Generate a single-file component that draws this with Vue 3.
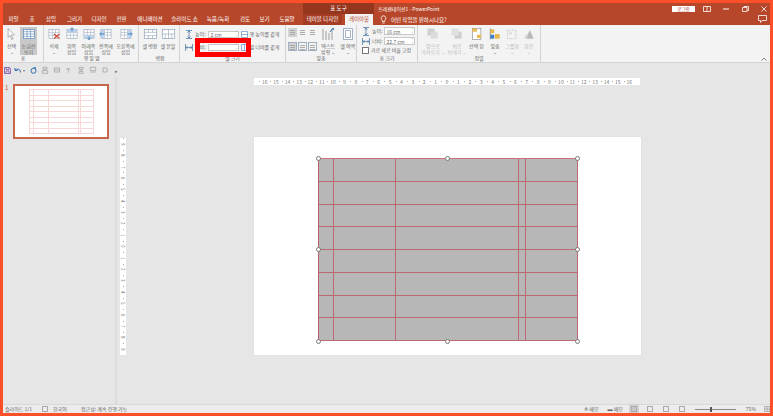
<script setup>
const tabs = [
  { t: '파일', w: 21 }, { t: '홈', w: 16 }, { t: '삽입', w: 22 }, { t: '그리기', w: 25 },
  { t: '디자인', w: 24 }, { t: '전환', w: 21 }, { t: '애니메이션', w: 36 }, { t: '슬라이드 쇼', w: 33 },
  { t: '녹음/녹화', w: 34 }, { t: '검토', w: 20 }, { t: '보기', w: 19 }, { t: '도움말', w: 26 }
]

// 리본 아이콘
const T = '<rect x="2.5" y="2.5" width="13" height="11" fill="#fff" stroke="#8a9bb0" stroke-width=".7"/><path d="M2.5 6h13M2.5 9.5h13M7 2.5v11M11 2.5v11" stroke="#8a9bb0" stroke-width=".6"/>'
const icons = {
  select: '<path d="M4 1l8 8-4 .4 2.4 5-1.6.7L6.5 10 4 12.5z" fill="#fff" stroke="#888" stroke-width=".8"/>',
  grid: '<rect x="2" y="2" width="14" height="12" fill="#fff" stroke="#4c7fb3" stroke-width=".8"/><path d="M2 5h14M2 8h14M2 11h14M6.5 2v12M11 2v12" stroke="#4c7fb3" stroke-width=".7"/>',
  del: T + '<path d="M9 8l7 6M16 8l-7 6" stroke="#d8452b" stroke-width="1.5"/>',
  above: T + '<rect x="2.5" y="2.5" width="13" height="3.5" fill="#bcd3ea"/><path d="M9 5V0M7 2l2-2 2 2" stroke="#2f75b5" fill="none"/>',
  below: T + '<rect x="2.5" y="9.5" width="13" height="4" fill="#bcd3ea"/><path d="M9 11v4M7 13.5l2 2 2-2" stroke="#2f75b5" fill="none"/>',
  left: T + '<rect x="2.5" y="2.5" width="4.5" height="11" fill="#bcd3ea"/><path d="M7 8H1M3 6L1 8l2 2" stroke="#2f75b5" fill="none"/>',
  right: T + '<rect x="11" y="2.5" width="4.5" height="11" fill="#bcd3ea"/><path d="M11 8h6M15 6l2 2-2 2" stroke="#2f75b5" fill="none"/>',
  merge: '<rect x="1.5" y="2.5" width="15" height="11" fill="#fff" stroke="#7d93ad" stroke-width=".7"/><path d="M1.5 6h15M1.5 10h15M6.5 2.5V6M11.5 2.5V6M6.5 10v3.5M11.5 10v3.5" stroke="#7d93ad" stroke-width=".6"/>',
  split: '<rect x="1.5" y="2.5" width="15" height="11" fill="#fff" stroke="#7d93ad" stroke-width=".7"/><path d="M1.5 8h15M9 2.5V13.5M5 8v5.5M13 8v5.5" stroke="#7d93ad" stroke-width=".6"/>',
  front: '<rect x="2" y="1" width="9" height="9" fill="#cfcfcf"/><rect x="6" y="5" width="9" height="9" fill="#dcdcdc"/>',
  back: '<rect x="6" y="5" width="9" height="9" fill="#cfcfcf"/><rect x="2" y="1" width="9" height="9" fill="#e0e0e0"/>',
  pane: '<rect x="3" y="1" width="11" height="14" fill="#fff" stroke="#777" stroke-width=".7"/><rect x="3" y="1" width="6" height="4" fill="#e8b84a"/><rect x="9" y="9" width="5" height="4" fill="#e8b84a"/>',
  align: '<path d="M3 1v14" stroke="#555" stroke-width=".8"/><rect x="3" y="2" width="5" height="5" fill="#e8b84a"/><rect x="3" y="9" width="5" height="5" fill="#3f7fc1"/><rect x="9" y="8" width="6" height="6" fill="#e8b84a"/>',
  group: '<rect x="3" y="3" width="11" height="11" fill="none" stroke="#c4c4c4" stroke-dasharray="2 1"/><rect x="5" y="5" width="4" height="4" fill="#e2e2e2"/>',
  rotate: '<path d="M10 3l5 11H5z" fill="#b9b9b9"/><path d="M2 14l4-7 1 7z" fill="#dcdcdc"/>'
}

const rowBtns = [
  { i: 'del', a: '삭제', b: '⌄', w: 18 }, { i: 'above', a: '위쪽', b: '삽입', w: 17 }, { i: 'below', a: '아래쪽', b: '삽입', w: 17 },
  { i: 'left', a: '왼쪽에', b: '삽입', w: 18 }, { i: 'right', a: '오른쪽에', b: '삽입', w: 21 }
]
const arrangeBtns = [
  { i: 'front', a: '앞으로', b: '가져오기 ⌄', w: 30, off: true }, { i: 'back', a: '뒤로', b: '보내기 ⌄', w: 18, off: true },
  { i: 'pane', a: '선택 창', b: '', w: 21 }, { i: 'align', a: '맞춤', b: '⌄', w: 16 },
  { i: 'group', a: '그룹화', b: '⌄', w: 18, off: true }, { i: 'rotate', a: '회전', b: '⌄', w: 15, off: true }
]

const hruler = []
for (let n = 16; n > 0; n--) hruler.push(n)
for (let n = 0; n <= 16; n++) hruler.push(n)
const vruler = [9, 8, 7, 6, 5, 4, 3, 2, 1, 0, 1, 2, 3, 4, 5, 6, 7, 8, 9]
const qat = ['M3 2h6v3H3zM2 7h8v4H2z', 'M2 3h8v6H2zM2 6h8', 'M2 6l3-3 3 3M5 3v7', 'M3 2h6v3H3zM3 8h6v3H3zM6 5v3', 'M2 2h8v5H2zM2 9h8', 'M3 3h6v6H3z']

// 표 칸
const colWidths = [15, 62, 123, 7, 52]
const cells = []
for (let r = 0; r < 8; r++) {
  for (let c = 0; c < colWidths.length; c++) cells.push(r + '-' + c)
}
</script>

<template>
  <div class="page">
    <header class="titlebar">
      <div class="title-row">
        <div class="tools-label">표 도구</div>
        <div class="doc-title">프레젠테이션1 - PowerPoint</div>
        <button class="login">로그인</button>
        <div class="win-btns">
          <svg width="8" height="6" viewBox="0 0 8 6"><path d="M.5.5h7v5h-7zM4 .5v5" fill="none" stroke="#fff" stroke-width=".8" /></svg>
          <svg width="8" height="6" viewBox="0 0 8 6"><path d="M1 3h6" stroke="#fff" /></svg>
          <svg width="8" height="6" viewBox="0 0 8 6"><path d="M1.5 1.5h4.500v4h-4.500zM3 1.500V.5h4.500v4h-1.500" fill="none" stroke="#fff" stroke-width=".8" /></svg>
          <svg width="8" height="6" viewBox="0 0 8 6"><path d="M1.5.5l5 5M6.5.5l-5 5" stroke="#fff" stroke-width=".8" /></svg>
        </div>
      </div>
      <div class="tab-row">
        <span v-for="tab in tabs" :key="tab.t" class="tab" :style="{ width: tab.w + 'px' }">{{ tab.t }}</span>
        <span class="tab tool-tab">테이블 디자인</span>
        <span class="tab active-tab">레이아웃</span>
        <svg class="bulb" width="7" height="9" viewBox="0 0 7 9"><path d="M3.5.8a2.400 2.400 0 0 0-1.300 4.400V6.500h2.600V5.200A2.400 2.400 0 0 0 3.500.8zM2.400 8h2.200" fill="none" stroke="#fff" stroke-width=".8" /></svg>
        <span class="tell">어떤 작업을 원하시나요?</span>
        <svg class="comment" width="9" height="8" viewBox="0 0 9 8"><path d="M.5.5h8v5H4L2.500 7.500v-2h-2z" fill="none" stroke="#fff" stroke-width=".8" /></svg>
      </div>
    </header>

    <section class="ribbon">
      <div class="group g-table">
        <div class="big-row">
          <div class="big" style="width: 17px">
            <svg width="14" height="14" viewBox="0 0 18 16" v-html="icons.select"></svg>
            <span>선택</span><span>⌄</span>
          </div>
          <div class="big on" style="width: 17px">
            <svg width="14" height="14" viewBox="0 0 18 16" v-html="icons.grid"></svg>
            <span>눈금선</span><span>보기</span>
          </div>
        </div>
        <div class="group-name">표</div>
      </div>

      <div class="group g-rows">
        <div class="big-row">
          <div v-for="b in rowBtns" :key="b.a" class="big" :style="{ width: b.w + 'px' }">
            <svg width="14" height="14" viewBox="0 0 18 16" v-html="icons[b.i]"></svg>
            <span>{{ b.a }}</span><span>{{ b.b }}</span>
          </div>
        </div>
        <div class="group-name">행 및 열</div>
      </div>

      <div class="group g-merge">
        <div class="big-row">
          <div class="big" style="width: 18px">
            <svg width="15" height="14" viewBox="0 0 18 16" v-html="icons.merge"></svg>
            <span>셀 병합</span>
          </div>
          <div class="big" style="width: 18px">
            <svg width="15" height="14" viewBox="0 0 18 16" v-html="icons.split"></svg>
            <span>셀 분할</span>
          </div>
        </div>
        <div class="group-name">병합</div>
      </div>

      <div class="group g-cell">
        <div class="cell-rows">
          <div class="size-row">
            <svg width="8" height="9" viewBox="0 0 8 9"><path d="M1 .5h6M1 8.500h6M4 1v7M2.500 2.500L4 1l1.500 1.500M2.500 6.500L4 8l1.500-1.500" stroke="#3f6f9f" fill="none" stroke-width=".7" /></svg>
            <span class="lbl">높이:</span>
            <div class="spin"><span>2 cm</span><i>⌃<br />⌄</i></div>
            <svg class="dist" width="7" height="7" viewBox="0 0 7 7"><path d="M.5.5h6v6h-6zM.5 3.500h6" fill="#fff" stroke="#4c7fb3" stroke-width=".6" /></svg>
            <span class="lbl">행 높이를 같게</span>
          </div>
          <div class="size-row">
            <svg width="8" height="9" viewBox="0 0 8 9"><path d="M.5 1v7M7.500 1v7M1 4.500h6M2.500 3L1 4.500 2.500 6M5.500 3L7 4.500 5.500 6" stroke="#3f6f9f" fill="none" stroke-width=".7" /></svg>
            <span class="lbl">너비:</span>
            <div class="spin"><span></span><i>⌃<br />⌄</i></div>
            <svg class="dist" width="7" height="7" viewBox="0 0 7 7"><path d="M.5.5h6v6h-6zM3.500.5v6" fill="#fff" stroke="#4c7fb3" stroke-width=".6" /></svg>
            <span class="lbl">열 너비를 같게</span>
          </div>
        </div>
        <div class="group-name">셀 크기</div>
        <div class="red-box"></div>
      </div>

      <div class="group g-align">
        <div class="align-body">
          <div class="align-grid">
            <i class="al sel"></i><i class="al"></i><i class="al"></i>
            <i class="al sel b"></i><i class="al b"></i><i class="al b"></i>
          </div>
          <div class="big" style="width: 19px">
            <svg width="14" height="14" viewBox="0 0 14 14"><path d="M2 2v11M5 4v9M8 6v7M11 2v11" stroke="#888" stroke-width=".8" /><path d="M9 5l3-4 1 2" stroke="#2f75b5" fill="none" /></svg>
            <span>텍스트</span><span>방향 ⌄</span>
          </div>
          <div class="big" style="width: 17px">
            <svg width="12" height="14" viewBox="0 0 12 14"><path d="M1.500 1.500h9v11h-9zM3.500 3.500h5v7h-5z" fill="#fff" stroke="#7d93ad" stroke-width=".7" /></svg>
            <span>셀 여백</span><span>⌄</span>
          </div>
        </div>
        <div class="group-name">맞춤</div>
      </div>

      <div class="group g-size">
        <div class="cell-rows">
          <div class="size-row">
            <svg width="8" height="9" viewBox="0 0 8 9"><path d="M1 .5h6M1 8.500h6M4 1v7M2.500 2.500L4 1l1.500 1.500M2.500 6.500L4 8l1.500-1.500" stroke="#3f6f9f" fill="none" stroke-width=".7" /></svg>
            <span class="lbl">높이:</span>
            <div class="spin small"><span>16 cm</span><i>⌃<br />⌄</i></div>
          </div>
          <div class="size-row">
            <svg width="8" height="9" viewBox="0 0 8 9"><path d="M.5 1v7M7.500 1v7M1 4.500h6M2.500 3L1 4.500 2.500 6M5.500 3L7 4.500 5.500 6" stroke="#3f6f9f" fill="none" stroke-width=".7" /></svg>
            <span class="lbl">너비:</span>
            <div class="spin small"><span>22.7 cm</span><i>⌃<br />⌄</i></div>
          </div>
          <label class="lock"><i class="check"></i>가로 세로 비율 고정</label>
        </div>
        <div class="group-name">표 크기</div>
      </div>

      <div class="group g-arrange">
        <div class="big-row">
          <div v-for="b in arrangeBtns" :key="b.a" class="big" :class="{ off: b.off }" :style="{ width: b.w + 'px' }">
            <svg width="14" height="14" viewBox="0 0 18 16" v-html="icons[b.i]"></svg>
            <span>{{ b.a }}</span><span>{{ b.b }}</span>
          </div>
        </div>
        <div class="group-name">정렬</div>
      </div>
      <svg class="collapse" width="6" height="4" viewBox="0 0 6 4"><path d="M.5 3.500L3 1l2.500 2.500" fill="none" stroke="#666" stroke-width=".8" /></svg>
    </section>

    <div class="qat">
      <svg class="save" width="7" height="7" viewBox="0 0 7 7"><path d="M.5.5h5l1 1v5h-6zM2 .5v2h3v-2M2 6.500V4h3v2.500" fill="none" stroke="#7a4fa3" stroke-width=".8" /></svg>
      <div class="undo">
        <svg width="9" height="7" viewBox="0 0 9 7"><path d="M1 1v2.500h2.500M1 3.500a3 3 0 0 1 5.500 2" fill="none" stroke="#2f6fae" /></svg>
        <span>▾</span>
      </div>
      <svg width="7" height="7" viewBox="0 0 7 7"><circle cx="3.500" cy="3.800" r="2.500" fill="none" stroke="#2f6fae" /><path d="M3.500.5h2v1.500" fill="none" stroke="#2f6fae" stroke-width=".8" /></svg>
      <svg v-for="(d, i) in qat" :key="i" width="8" height="8" viewBox="0 0 12 12"><path :d="d" fill="none" stroke="#999" /></svg>
      <span class="qat-more">▸</span>
    </div>

    <main class="work">
      <aside class="thumbs">
        <span class="num">1</span>
        <div class="thumb">
          <div class="mini">
            <i v-for="c in cells" :key="c"></i>
          </div>
        </div>
      </aside>

      <div class="editor">
        <div class="hruler">
          <span v-for="(n, i) in hruler" :key="i">{{ n }}</span>
        </div>
        <div class="stage">
          <div class="vruler">
            <span v-for="(n, i) in vruler" :key="i">{{ n }}</span>
          </div>
          <div class="slide">
            <div class="table-wrap">
              <div class="table">
                <i v-for="c in cells" :key="c"></i>
              </div>
              <b class="handle" style="left: 0; top: 0"></b>
              <b class="handle" style="left: 50%; top: 0"></b>
              <b class="handle" style="left: 100%; top: 0"></b>
              <b class="handle" style="left: 0; top: 50%"></b>
              <b class="handle" style="left: 100%; top: 50%"></b>
              <b class="handle" style="left: 0; top: 100%"></b>
              <b class="handle" style="left: 50%; top: 100%"></b>
              <b class="handle" style="left: 100%; top: 100%"></b>
            </div>
          </div>
        </div>
      </div>
    </main>

    <footer class="status">
      <span style="width: 36px">슬라이드 1/1</span>
      <svg width="6" height="6" viewBox="0 0 6 6"><path d="M.5.5h5v5h-5z" fill="none" stroke="#888" stroke-width=".7" /></svg>
      <span style="width: 21px; margin-left: 5px">한국어</span>
      <span class="access">접근성: 계속 진행 가능</span>
      <span>≜ 메모</span>
      <span class="notes">▬ 메모</span>
      <div class="views">
        <i class="view on"></i><i class="view"></i><i class="view"></i><i class="view"></i>
      </div>
      <div class="zoom"><b></b></div>
      <span class="pct">75%</span>
      <svg class="fit" width="6" height="6" viewBox="0 0 6 6"><path d="M.5.5h5v5h-5zM2 2h2v2H2z" fill="none" stroke="#999" stroke-width=".7" /></svg>
    </footer>
  </div>
</template>

<style scoped>
.page {
  position: relative;
  width: 773px;
  height: 416px;
  box-sizing: border-box;
  border: 3px solid #fd5028;
  display: flex;
  flex-direction: column;
  background: #e6e6e6;
  font-family: "Noto Sans CJK KR", "Noto Sans", sans-serif;
  color: #666;
  overflow: hidden;
}

.titlebar {
  height: 22px;
  background: #b7472a;
  color: #fff;
  font-size: 5.5px;
  flex: none;
}
.title-row {
  height: 11px;
  display: flex;
  align-items: center;
  position: relative;
}
.tools-label {
  position: absolute;
  left: 300px;
  top: 0;
  width: 71px;
  height: 11px;
  background: #95361f;
  line-height: 11px;
  text-align: center;
}
.doc-title {
  margin-left: 375px;
  line-height: 11px;
  font-size: 5px;
}
.login {
  margin-left: auto;
  width: 23px;
  height: 6px;
  margin-right: 8px;
  padding: 0;
  border: none;
  background: #fff;
  color: #a33;
  font: 4.5px/6px "Noto Sans CJK KR", sans-serif;
}
.win-btns {
  display: flex;
  gap: 11px;
  margin-right: 2px;
}
.tab-row {
  height: 11px;
  display: flex;
  align-items: center;
  position: relative;
}
.tab {
  text-align: center;
  white-space: nowrap;
  line-height: 11px;
}
.tool-tab {
  width: 39px;
  margin-left: 3px;
  background: #a53d24;
}
.active-tab {
  width: 28px;
  margin-left: 3px;
  background: #f3f3f3;
  color: #b7472a;
  height: 11px;
}
.bulb {
  margin-left: 7px;
}
.tell {
  margin-left: 4px;
}
.comment {
  position: absolute;
  right: 3px;
  top: 1px;
}

.ribbon {
  position: relative;
  height: 38px;
  flex: none;
  display: flex;
  box-sizing: border-box;
  background: #f3f3f3;
  border-bottom: 1px solid #d4d4d4;
  font-size: 5px;
  line-height: 6px;
}
.group {
  position: relative;
  height: 37px;
  box-sizing: border-box;
  border-right: 1px solid #d2d2d2;
  display: flex;
  flex-direction: column;
  flex: none;
}
.group-name {
  margin-top: auto;
  text-align: center;
  height: 7px;
  color: #666;
}
.g-table { width: 41px; }
.g-rows { width: 95px; padding-left: 1px; }
.g-merge { width: 41px; padding-left: 2px; }
.g-cell { width: 106px; }
.g-align { width: 71px; }
.g-size { width: 61px; }
.g-arrange { width: 123px; }
.big-row {
  display: flex;
  padding-top: 2px;
}
.big {
  display: flex;
  flex-direction: column;
  align-items: center;
  white-space: nowrap;
  height: 28px;
}
.big svg {
  margin-bottom: 2px;
  flex: none;
}
.big.on {
  background: #c8c8c8;
}
.big.off {
  color: #b8b8b8;
}
.cell-rows {
  padding: 2px 0 0 5px;
  display: flex;
  flex-direction: column;
  gap: 2px;
}
.g-cell .cell-rows {
  padding-top: 5px;
  gap: 5px;
}
.size-row {
  display: flex;
  align-items: center;
  height: 8px;
  white-space: nowrap;
}
.lbl {
  margin-left: 2px;
}
.spin {
  width: 31px;
  height: 7px;
  margin-left: 2px;
  background: #fff;
  border: 1px solid #c8c8c8;
  box-sizing: border-box;
  display: flex;
  align-items: center;
  justify-content: space-between;
  padding-left: 2px;
  line-height: 5px;
}
.spin.small {
  width: 31px;
  height: 8px;
  margin-left: 1px;
}
.spin i {
  font-style: normal;
  font-size: 3px;
  line-height: 3px;
  color: #666;
}
.dist {
  margin-left: 2px;
  flex: none;
}
.red-box {
  position: absolute;
  left: 15px;
  top: 13px;
  width: 56px;
  height: 19px;
  box-sizing: border-box;
  border: 5px solid #ff0000;
}
.align-body {
  display: flex;
  padding: 2px 0 0 2px;
  gap: 2px;
}
.align-grid {
  display: grid;
  grid-template-columns: repeat(3, 9px);
  grid-auto-rows: 9px;
  gap: 5px 1px;
  margin-top: 1px;
}
.al {
  background:
    linear-gradient(#aaa, #aaa) center 2px / 5px 1px no-repeat,
    linear-gradient(#aaa, #aaa) center 4px / 5px 1px no-repeat,
    linear-gradient(#aaa, #aaa) center 6px / 5px 1px no-repeat;
}
.al.sel {
  background-color: #d2d2d2;
}
.al.b {
  border: 1px solid #9fb0c2;
  box-sizing: border-box;
}
.lock {
  display: flex;
  align-items: center;
  gap: 2px;
  white-space: nowrap;
  height: 6px;
}
.check {
  width: 5px;
  height: 5px;
  border: 1px solid #777;
  background: #fff;
}
.collapse {
  position: absolute;
  right: 3px;
  bottom: 1px;
}

.qat {
  height: 14px;
  flex: none;
  display: flex;
  align-items: center;
  gap: 4px;
  padding-left: 1px;
  box-sizing: border-box;
  background: #e6e6e6;
}
.save {
  margin-right: -1px;
}
.undo {
  width: 12px;
  display: flex;
  align-items: center;
  font-size: 4px;
  color: #777;
}
.qat-more {
  font-size: 5px;
  color: #777;
  margin-left: 2px;
}

.work {
  flex: 1;
  min-height: 0;
  display: flex;
}
.thumbs {
  width: 114px;
  box-sizing: border-box;
  border-right: 2px solid #dcdcdc;
  padding: 7px 0 0 2px;
  display: flex;
  align-items: flex-start;
  gap: 5px;
  flex: none;
}
.num {
  font-size: 6px;
  line-height: 7px;
  color: #c8553a;
}
.thumb {
  width: 96px;
  height: 55px;
  box-sizing: border-box;
  border: 2px solid #c5664d;
  background: #fff;
  padding: 3px 0 0 14px;
}
.mini {
  width: 64px;
  display: grid;
  grid-template-columns: 4px 15px 30px 2px 13px;
  grid-auto-rows: 5.5px;
  border-top: 1px solid #f8d7d7;
  border-left: 1px solid #f8d7d7;
}
.mini i {
  border-right: 1px solid #f8d7d7;
  border-bottom: 1px solid #f8d7d7;
}

.editor {
  flex: 1;
  min-width: 0;
  padding: 1px 0 0 137px;
  display: flex;
  flex-direction: column;
}
.hruler {
  width: 386px;
  height: 7px;
  background: #fff;
  display: flex;
  justify-content: center;
  font-size: 5px;
  line-height: 7px;
  color: #777;
}
.hruler span {
  width: 11.4px;
  text-align: center;
  background: linear-gradient(#aaa, #aaa) 0 50% / 1px 1px no-repeat;
}
.stage {
  margin: 52px 0 0 -134px;
  display: flex;
}
.vruler {
  width: 6px;
  height: 217px;
  margin-top: 1px;
  background: #fff;
  display: flex;
  flex-direction: column;
  justify-content: center;
  font-size: 4.5px;
  color: #777;
}
.vruler span {
  height: 11.4px;
  line-height: 6px;
  writing-mode: vertical-rl;
  text-align: center;
  background: linear-gradient(#aaa, #aaa) 50% 0 / 1px 1px no-repeat;
}
.slide {
  width: 387px;
  height: 218px;
  margin-left: 128px;
  background: #fff;
  box-shadow: 0 0 1px #cfcfcf;
  padding: 21px 0 0 64px;
  box-sizing: border-box;
  flex: none;
}
.table-wrap {
  position: relative;
  width: 259px;
  height: 183px;
}
.table {
  width: 259px;
  height: 183px;
  display: grid;
  grid-template-columns: 15px 62px 123px 7px 52px;
  grid-template-rows: repeat(8, 1fr);
  background: #b7b7b7;
  box-sizing: border-box;
  border-top: 1px solid #c9707a;
  border-left: 1px solid #b8606a;
}
.table i {
  border-right: 1px solid #bc6a72;
  border-bottom: 1px solid #bc6a72;
}
.handle {
  position: absolute;
  width: 5px;
  height: 5px;
  margin: -2.5px 0 0 -2.5px;
  box-sizing: border-box;
  border: 1px solid #777;
  border-radius: 50%;
  background: #fff;
}

.status {
  height: 8px;
  flex: none;
  display: flex;
  align-items: center;
  background: #ececec;
  border-top: 1px solid #dadada;
  font-size: 5px;
  line-height: 8px;
  padding-left: 2px;
  white-space: nowrap;
  color: #666;
}
.status > svg {
  margin-left: 1px;
}
.access {
  margin-left: 7px;
}
.access + span {
  margin-left: auto;
  margin-right: 9px;
}
.notes {
  margin-right: 8px;
}
.views {
  display: flex;
  gap: 10px;
  margin-right: 10px;
}
.view {
  width: 6px;
  height: 6px;
  border: 1px solid #aaa;
  box-sizing: border-box;
}
.view.on {
  background: #c8c8c8;
  box-shadow: 0 0 0 2px #d0d0d0;
}
.zoom {
  position: relative;
  width: 41px;
  height: 1px;
  background: #888;
}
.zoom b {
  position: absolute;
  left: 15px;
  top: -2px;
  width: 2px;
  height: 5px;
  background: #555;
}
.pct {
  margin: 0 7px 0 10px;
}
.fit {
  margin-right: 0;
}
</style>
